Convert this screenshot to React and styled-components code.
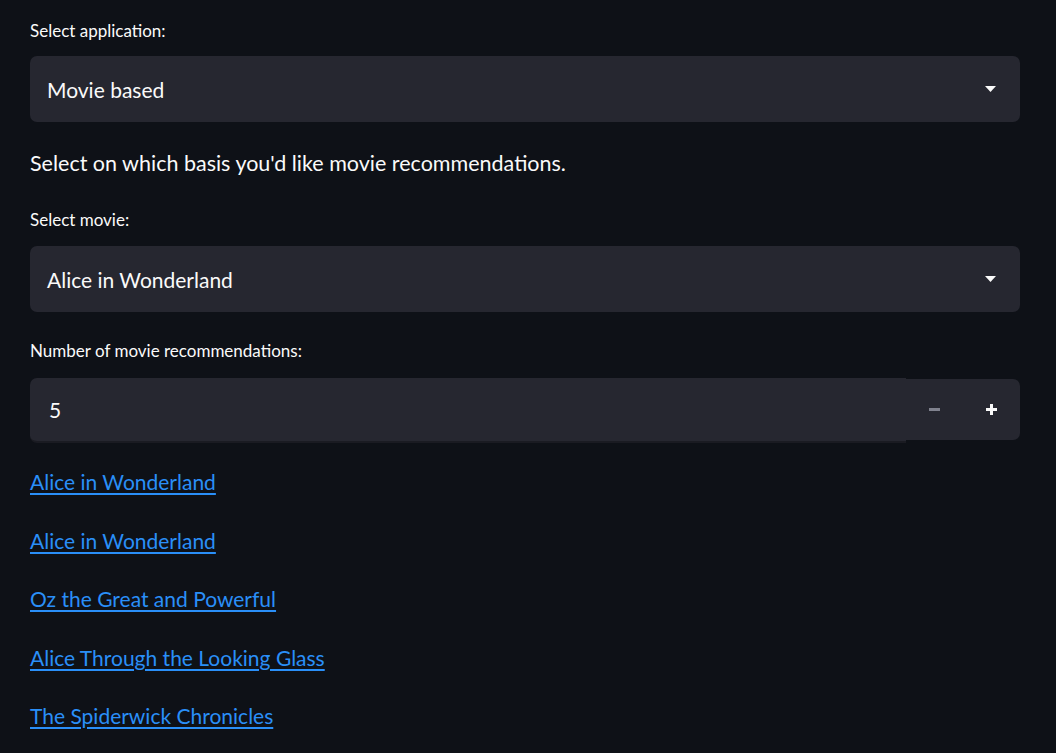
import React from 'react'
import styled, { createGlobalStyle } from 'styled-components'

const GlobalStyle = createGlobalStyle`
    body {
        margin: 0;
        background: #0e1117;
        font-family: Lato, "Liberation Sans", sans-serif;
        color: #fafafa;
    }
`;

const Main = styled.div`
    width: 990px;
    padding: 19px 0 0 30px;
`;

const Label = styled.div`
    height: 24px;
    line-height: 24px;
    font-size: 17px;
    margin-top: ${props => props.top || 0}px;
    margin-bottom: ${props => props.bottom || 13}px;
`;

const SelectBox = styled.div`
    height: 66px;
    background: #262730;
    border-radius: 7px;
    display: flex;
    align-items: center;
    justify-content: space-between;
    padding: 0 24px 0 17px;
    font-size: 21px;
`;

const Caret = () => (
    <svg width="11" height="6" viewBox="0 0 11 6">
        <path d="M0 0 H11 L5.5 6 Z" fill="#fafafa" />
    </svg>
);

const Paragraph = styled.p`
    margin: 26px 0 0;
    line-height: 30px;
    font-size: 21.5px;
`;

const NumberRow = styled.div`
    display: flex;
    align-items: center;
    height: 66px;
`;

const NumberField = styled.div`
    flex: 1;
    height: 65px;
    box-sizing: border-box;
    background: #262730;
    border-bottom: 2px solid #1a1b22;
    border-radius: 7px 0 0 7px;
    display: flex;
    align-items: center;
    padding-left: 19px;
    font-size: 21px;
`;

const Steppers = styled.div`
    width: 114px;
    height: 61px;
    background: #262730;
    border-radius: 0 7px 7px 0;
    display: flex;
    margin-top: -2px;
`;

const StepButton = styled.div`
    flex: 1;
    display: flex;
    align-items: center;
    justify-content: center;
`;

const Minus = () => (
    <svg width="11" height="3" viewBox="0 0 11 3">
        <rect width="11" height="3" fill="#80828e" />
    </svg>
);

const Plus = () => (
    <svg width="11" height="11" viewBox="0 0 11 11">
        <rect y="4" width="11" height="3" fill="#fafafa" />
        <rect x="4" width="3" height="11" fill="#fafafa" />
    </svg>
);

const Links = styled.div`
    display: flex;
    flex-direction: column;
    align-items: flex-start;
    gap: 28.5px;
    margin-top: 24px;
`;

const Link = styled.a`
    color: #2a8ff8;
    font-size: 21px;
    line-height: 30px;
    text-decoration: underline;
    text-underline-offset: 3px;
    text-decoration-thickness: 2px;
`;

const movies = [
    'Alice in Wonderland',
    'Alice in Wonderland',
    'Oz the Great and Powerful',
    'Alice Through the Looking Glass',
    'The Spiderwick Chronicles',
]

function App() {
    return (
        <>
            <GlobalStyle />
            <Main>
                <Label>Select application:</Label>
                <SelectBox>
                    <span>Movie based</span>
                    <Caret />
                </SelectBox>
                <Paragraph>Select on which basis you'd like movie recommendations.</Paragraph>
                <Label top={30} bottom={14}>Select movie:</Label>
                <SelectBox>
                    <span>Alice in Wonderland</span>
                    <Caret />
                </SelectBox>
                <Label top={27} bottom={14}>Number of movie recommendations:</Label>
                <NumberRow>
                    <NumberField>5</NumberField>
                    <Steppers>
                        <StepButton><Minus /></StepButton>
                        <StepButton><Plus /></StepButton>
                    </Steppers>
                </NumberRow>
                <Links>
                    {movies.map((m, i) => (
                        <Link key={i} href="#">{m}</Link>
                    ))}
                </Links>
            </Main>
        </>
    )
}

export default App
